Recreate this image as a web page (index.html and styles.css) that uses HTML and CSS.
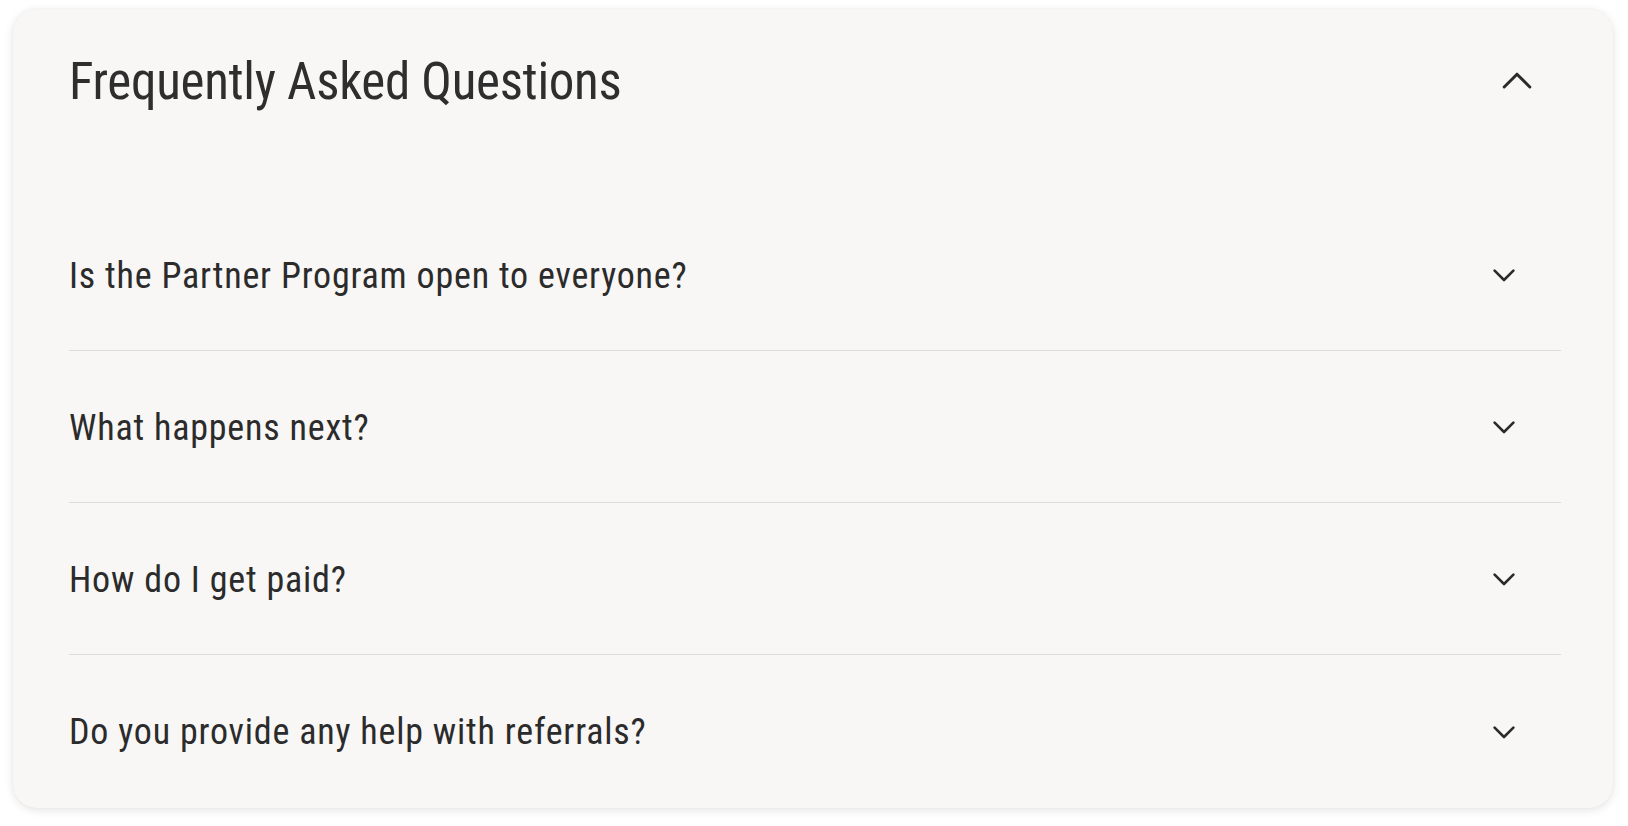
FILE: index.html
```html
<!DOCTYPE html>
<html lang="en">
<head>
<meta charset="utf-8">
<title>Frequently Asked Questions</title>
<link rel="stylesheet" href="styles.css">
</head>
<body>
<section class="faq-card">
  <header class="faq-header">
    <h2 class="faq-title">Frequently Asked Questions</h2>
    <button class="toggle toggle-main" aria-label="Collapse">
      <svg class="chev-up" width="30" height="17" viewBox="0 0 30 17" fill="none"><path d="M2.2 15 L15 2.2 L27.8 15" stroke="currentColor" stroke-width="3" stroke-linecap="round" stroke-linejoin="round"/></svg>
    </button>
  </header>
  <div class="faq-list">
    <div class="faq-item">
      <span class="faq-q">Is the Partner Program open to everyone?</span>
      <svg class="chev-down" width="22" height="13" viewBox="0 0 22 13" fill="none"><path d="M1.6 1.6 L11 11 L20.4 1.6" stroke="currentColor" stroke-width="2.6" stroke-linecap="round" stroke-linejoin="round"/></svg>
    </div>
    <div class="faq-item">
      <span class="faq-q">What happens next?</span>
      <svg class="chev-down" width="22" height="13" viewBox="0 0 22 13" fill="none"><path d="M1.6 1.6 L11 11 L20.4 1.6" stroke="currentColor" stroke-width="2.6" stroke-linecap="round" stroke-linejoin="round"/></svg>
    </div>
    <div class="faq-item">
      <span class="faq-q">How do I get paid?</span>
      <svg class="chev-down" width="22" height="13" viewBox="0 0 22 13" fill="none"><path d="M1.6 1.6 L11 11 L20.4 1.6" stroke="currentColor" stroke-width="2.6" stroke-linecap="round" stroke-linejoin="round"/></svg>
    </div>
    <div class="faq-item">
      <span class="faq-q">Do you provide any help with referrals?</span>
      <svg class="chev-down" width="22" height="13" viewBox="0 0 22 13" fill="none"><path d="M1.6 1.6 L11 11 L20.4 1.6" stroke="currentColor" stroke-width="2.6" stroke-linecap="round" stroke-linejoin="round"/></svg>
    </div>
  </div>
</section>
</body>
</html>
```
FILE: styles.css
```css
html, body {
  margin: 0;
  background: #ffffff;
}
body {
  padding: 9px 15px 18px 13px;
  font-family: Roboto, "Noto Sans", sans-serif;
  font-stretch: condensed;
  color: #2b2b2b;
}
.faq-card {
  width: 1600px;
  height: 799px;
  box-sizing: border-box;
  background: #f8f7f6;
  border-radius: 24px;
  box-shadow: 0 2px 10px rgba(0, 0, 0, 0.11), 0 0 2px rgba(0, 0, 0, 0.05);
  padding: 0 52px 0 56px;
}
.faq-header {
  display: flex;
  align-items: center;
  justify-content: space-between;
  padding-top: 42px;
}
.faq-title {
  margin: 0;
  font-size: 51px;
  line-height: 62px;
  font-weight: 400;
  letter-spacing: -0.3px;
  color: #2e2e2e;
}
.toggle {
  background: none;
  border: 0;
  padding: 0;
  margin: 0 29px 4px 0;
  color: #2b2b2b;
  display: flex;
}
.faq-list {
  margin-top: 86px;
}
.faq-item {
  display: flex;
  align-items: center;
  justify-content: space-between;
  height: 152px;
  box-sizing: border-box;
  border-bottom: 1px solid #dedcd9;
  padding-top: 2px;
}
.faq-item:last-child {
  border-bottom: 0;
}
.faq-q {
  font-size: 36px;
  line-height: 44px;
  letter-spacing: 0.8px;
  color: #2b2b2b;
}
.chev-down {
  margin-right: 46px;
  color: #2b2b2b;
}
```
